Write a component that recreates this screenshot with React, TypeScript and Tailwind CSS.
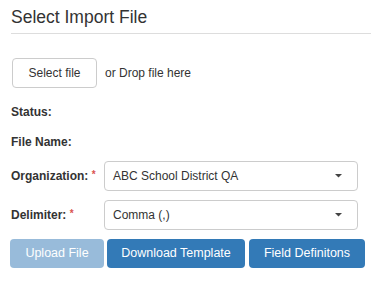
const font = "font-['Liberation_Sans','Helvetica_Neue',Arial,sans-serif]";

function Caret() {
  return (
    <svg width="7" height="4" viewBox="0 0 7 4" className="shrink-0">
      <path d="M0 0 L7 0 L3.5 3.5 Z" fill="#444" />
    </svg>
  );
}

function SelectRow({ label, value }: { label: string; value: string }) {
  return (
    <div className="mt-[9px] flex items-center">
      <div className="w-[93px] text-[12px] font-bold">
        {label} <span className="text-[#d9534f] text-[10px] align-top">*</span>
      </div>
      <div className="flex h-[30px] w-[254px] items-center justify-between rounded-[4px] border border-[#ccc] pl-[8px] pr-[15px] text-[12px]">
        <span>{value}</span>
        <Caret />
      </div>
    </div>
  );
}

export default function App() {
  return (
    <div className={`${font} bg-white text-[#333] w-[371px] h-[281px] pl-[11px]`}>
      <h2 className="border-b border-[#ddd] pt-[5px] pb-[4px] text-[17.5px] leading-[24px]">
        Select Import File
      </h2>

      <div className="mt-[24px] flex items-center pl-[1px]">
        <button className="h-[30px] w-[85px] rounded-[4px] border border-[#ccc] bg-white text-[12px]">
          Select file
        </button>
        <span className="ml-[8px] text-[12px]">or Drop file here</span>
      </div>

      <div className="mt-[14px] text-[12px] font-bold leading-[20px]">Status:</div>
      <div className="mt-[10px] text-[12px] font-bold leading-[20px]">File Name:</div>

      <SelectRow label="Organization:" value="ABC School District QA" />
      <SelectRow label="Delimiter:" value="Comma (,)" />

      <div className="mt-[9px] -ml-[1px] flex gap-[3px] text-[12.5px] text-white">
        <button className="h-[29px] w-[94px] rounded-[4px] bg-[#337ab7] opacity-50">
          Upload File
        </button>
        <button className="h-[29px] w-[138px] rounded-[4px] bg-[#337ab7]">
          Download Template
        </button>
        <button className="h-[29px] w-[116px] rounded-[4px] bg-[#337ab7] ml-[1px]">
          Field Definitons
        </button>
      </div>
    </div>
  );
}
